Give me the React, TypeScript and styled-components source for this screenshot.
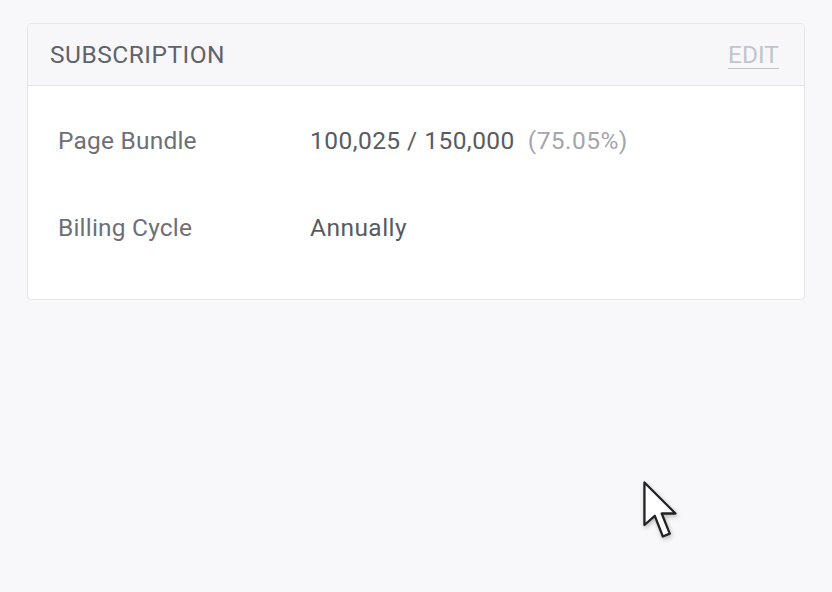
import styled, { createGlobalStyle } from 'styled-components';

const GlobalStyle = createGlobalStyle`
  html, body {
    margin: 0;
    padding: 0;
    background: #f8f8fa;
    font-family: Roboto, 'Liberation Sans', sans-serif;
  }
`;

const Page = styled.div`
  position: relative;
  width: 832px;
  height: 592px;
  box-sizing: border-box;
  padding: 23px 27px 0 27px;
  background: #f8f8fa;
  overflow: hidden;
`;

const Card = styled.section`
  width: 778px;
  box-sizing: border-box;
  border: 1px solid #e6e6ea;
  border-radius: 4px;
  background: #fff;
  overflow: hidden;
`;

const CardHeader = styled.header`
  height: 62px;
  box-sizing: border-box;
  display: flex;
  align-items: center;
  justify-content: space-between;
  padding: 0 25px 0 22px;
  background: #f7f7f9;
  border-bottom: 1px solid #e6e6ea;
`;

const Title = styled.h2`
  margin: 0;
  font-size: 24.5px;
  font-weight: 400;
  letter-spacing: 0.5px;
  color: #60636a;
`;

const EditLink = styled.a`
  font-size: 24.5px;
  color: #c3c4ca;
  text-decoration: underline;
  text-underline-offset: 5px;
  text-decoration-thickness: 1px;
  cursor: pointer;
`;

const CardBody = styled.div`
  display: grid;
  grid-template-columns: 252px 1fr;
  grid-auto-rows: 44px;
  row-gap: 43px;
  align-items: center;
  padding: 32px 30px 50px 30px;
`;

const Label = styled.div`
  font-size: 24.5px;
  letter-spacing: 0.2px;
  color: #6d7077;
`;

const Value = styled.div`
  font-size: 24.5px;
  letter-spacing: 0.45px;
  color: #585b62;
`;

const Muted = styled.span`
  margin-left: 13px;
  color: #a4a6ac;
`;

const Cursor = styled.svg`
  position: absolute;
  left: 641px;
  top: 479px;
  filter: drop-shadow(1px 2px 2px rgba(0, 0, 0, 0.25));
`;

const App = () => {
  return (
    <Page>
      <GlobalStyle />
      <Card>
        <CardHeader>
          <Title>SUBSCRIPTION</Title>
          <EditLink>EDIT</EditLink>
        </CardHeader>
        <CardBody>
          <Label>Page Bundle</Label>
          <Value>
            100,025 / 150,000<Muted>(75.05%)</Muted>
          </Value>
          <Label>Billing Cycle</Label>
          <Value>Annually</Value>
        </CardBody>
      </Card>
      <Cursor width="46" height="69" viewBox="0 0 40 60">
        <path
          d="M3 3 L3 40 L12 32 L19 50 L25 47.5 L18 30 L30 30 Z"
          fill="#fff"
          stroke="#222"
          strokeWidth="2"
          strokeLinejoin="round"
        />
      </Cursor>
    </Page>
  );
};

export default App;
